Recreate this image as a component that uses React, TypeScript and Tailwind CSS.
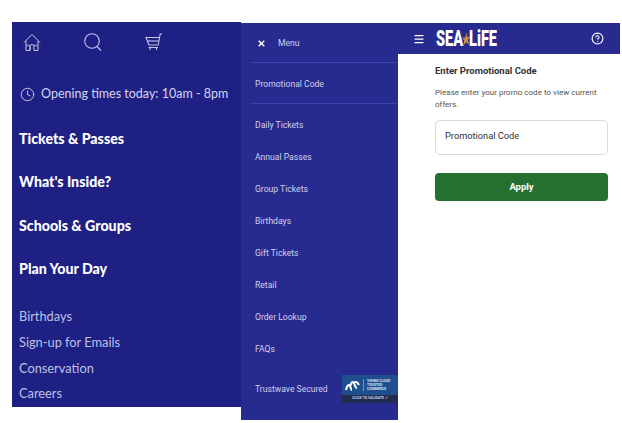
import React from 'react';
import { Menu, CircleHelp, Clock } from 'lucide-react';

const mainLinks = ['Tickets & Passes', "What's Inside?", 'Schools & Groups', 'Plan Your Day'];
const subLinks = ['Birthdays', 'Sign-up for Emails', 'Conservation', 'Careers'];
const ticketLinks = ['Daily Tickets', 'Annual Passes', 'Group Tickets', 'Birthdays', 'Gift Tickets', 'Retail', 'Order Lookup', 'FAQs'];

const HomeIcon = () => (
  <svg width="18" height="19" viewBox="0 0 18 19" fill="none" stroke="#c3c6ea" strokeWidth="1" className="ml-[11px] shrink-0">
    <path d="M1 9.500 9 1.500l8 8" />
    <path d="M3 8v9.500h4v-4a1.500 1.500 0 0 0-3 0M7 17.500v-4a1.500 1.500 0 0 1 4 0v4M11 17.500h4V8M14 13.500a1.500 1.500 0 0 0-3 0" />
  </svg>
);

const SearchIcon = () => (
  <svg width="18" height="18" viewBox="0 0 18 18" fill="none" stroke="#c3c6ea" strokeWidth="1.100" className="ml-[43px] shrink-0">
    <circle cx="8" cy="8" r="7.300" />
    <path d="m13 13.500 4 4" />
  </svg>
);

const CartIcon = () => (
  <svg width="18" height="18" viewBox="0 0 18 18" fill="none" stroke="#c3c6ea" strokeWidth="1.100" className="ml-[43px] shrink-0">
    <path d="M17 1h-1.800l-2 11H4L1 4.500h13.500" />
    <path d="M2.300 8h11" />
    <path d="M3.500 14.500h9.500M5 14.500V17M11.500 14.500V17" />
  </svg>
);

const CloseIcon = () => (
  <svg width="7" height="7" viewBox="0 0 7 7" stroke="#ffffff" strokeWidth="1.500" className="shrink-0">
    <path d="m.7.700 5.600 5.600M6.300.700.7 6.300" />
  </svg>
);

const Starfish = () => (
  <svg width="15" height="16" viewBox="0 0 16 16" className="mx-[-3px] shrink-0">
    <path d="M9.500 1 9.800 6 15 5 11 9l2.500 5.500-5-3L3.500 15l1.500-5.500L1 6.500l5 .5z" fill="#c98f45" />
  </svg>
);

const TrustBadge = () => (
  <div className="w-[56px] shrink-0 bg-[#1f4f8f]">
    <div className="flex h-[20px] items-center gap-[3px] pl-[3px]">
      <svg width="15" height="11" viewBox="0 0 15 11" fill="none" stroke="#ffffff" strokeWidth="2">
        <path d="M1 10c1-5 3-6 4-4s1 4 2 4M5 7c1-5 3-6 4-4s1 5 3 5M9 4c1-3 3-3 5 1" />
      </svg>
      <div className="border-l border-[#6f93bf] pl-[3px] text-[3.500px] leading-[4px] font-bold text-[#d6e2f0]">
        <div>VIKING CLOUD</div>
        <div>TRUSTED</div>
        <div>COMMERCE</div>
      </div>
    </div>
    <div className="flex h-[8px] items-center justify-center bg-[#222c4f] text-[3.500px] font-bold text-[#cfd5e0]">
      CLICK TO VALIDATE ✓
    </div>
  </div>
);

export default function App() {
  return (
    <div className="flex h-[423px] w-[622px] items-start overflow-hidden bg-white pl-[12px] pt-[22px]">
      {/* left phone: main site menu */}
      <div className="h-[385px] w-[229px] shrink-0 bg-[#1e2183] font-['Lato',sans-serif]">
        <div className="flex h-[50px] items-start border-b border-[#191c78] pt-[11px]">
          <HomeIcon />
          <SearchIcon />
          <CartIcon />
        </div>
        <div className="flex h-[45px] items-center gap-[6px] border-b border-[#191c78] pl-[8px] pt-[1px] text-[12.500px] whitespace-nowrap text-[#d3d5f0]">
          <Clock size={15} strokeWidth={1.400} className="shrink-0" />
          <span>Opening times today: 10am - 8pm</span>
        </div>
        {mainLinks.map((link) => (
          <div
            key={link}
            className="flex h-[43.500px] items-center border-b border-[#191c78] pl-[7px] text-[14.200px] font-black text-white"
          >
            {link}
          </div>
        ))}
        <div className="flex flex-col pt-[13px] text-[12.800px] text-[#bcc0e6]">
          {subLinks.map((link) => (
            <div key={link} className="flex h-[25.700px] items-center pl-[7px]">
              {link}
            </div>
          ))}
        </div>
      </div>

      {/* middle phone: tickets menu */}
      <div className="mt-[1px] h-[397px] w-[157px] shrink-0 border-b border-[#2c2f98] bg-[#272a8f] font-['Roboto',sans-serif] text-[8.600px] text-[#cfd1ee]">
        <div className="ml-[9px] flex h-[40px] items-center gap-[13px] border-b border-[#3d40aa] pl-[8px] pt-[1px]">
          <CloseIcon />
          <span>Menu</span>
        </div>
        <div className="ml-[9px] flex h-[41px] items-center border-b border-[#3d40aa] pl-[5px] pt-[2px]">Promotional Code</div>
        <div className="pt-[5px]">
          {ticketLinks.map((link) => (
            <div key={link} className="flex h-[32px] items-center pl-[14px]">
              {link}
            </div>
          ))}
        </div>
        <div className="mt-[10px] flex items-center justify-between pl-[14px]">
          <span>Trustwave Secured</span>
          <TrustBadge />
        </div>
      </div>

      {/* right phone: promo code form */}
      <div className="mt-[1px] w-[222px] shrink-0 font-['Roboto',sans-serif]">
        <div className="flex h-[31px] items-center bg-[#272a8f] pl-[15px] pr-[16px] text-white">
          <Menu size={12} strokeWidth={2.500} className="shrink-0" />
          <div className="ml-[11px] flex w-[62px] origin-left scale-x-[0.66] items-center text-[22px] leading-none font-black whitespace-nowrap">
            <span>SEA</span>
            <Starfish />
            <span>LiFE</span>
          </div>
          <CircleHelp size={13} strokeWidth={2} className="ml-auto shrink-0" />
        </div>
        <div className="pl-[37px] pr-[12px] pt-[11px]">
          <h1 className="text-[9.500px] leading-[12px] font-bold text-[#333333]">Enter Promotional Code</h1>
          <p className="mt-[10px] text-[8.050px] leading-[11.500px] text-[#555555]">
            Please enter your promo code to view current offers.
          </p>
          <div className="mt-[10px] flex h-[35px] items-center rounded-[5px] border border-[#d9d9d9] pb-[4px] pl-[9px] text-[9.250px] text-[#333333]">
            Promotional Code
          </div>
          <button className="mt-[18px] flex h-[28px] w-full items-center justify-center rounded-[4px] bg-[#257030] text-[9.500px] font-bold text-white">
            Apply
          </button>
        </div>
      </div>
    </div>
  );
}
